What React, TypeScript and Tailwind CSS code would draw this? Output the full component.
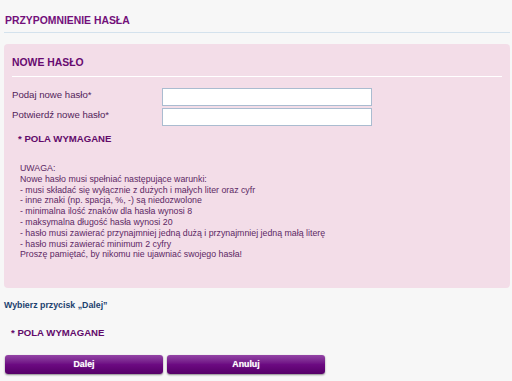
const rules = [
  "UWAGA:",
  "Nowe hasło musi spełniać następujące warunki:",
  "- musi składać się wyłącznie z dużych i małych liter oraz cyfr",
  "- inne znaki (np. spacja, %, -) są niedozwolone",
  "- minimalna ilość znaków dla hasła wynosi 8",
  "- maksymalna długość hasła wynosi 20",
  "- hasło musi zawierać przynajmniej jedną dużą i przynajmniej jedną małą literę",
  "- hasło musi zawierać minimum 2 cyfry",
  "Proszę pamiętać, by nikomu nie ujawniać swojego hasła!",
];

function Field({ label }: { label: string }) {
  return (
    <div className="flex items-start">
      <label className="w-[150px] text-[9.6px] leading-[14px] text-[#52235a]">{label}</label>
      <input
        type="password"
        className="h-[18px] w-[210px] border border-[#aabcd0] bg-white outline-none"
      />
    </div>
  );
}

function Button({ children }: { children: string }) {
  return (
    <button className="h-[19px] w-[158px] rounded-[3px] bg-linear-to-b from-[#9444a6] via-[#6c0a82] to-[#560068] text-[8.8px] font-bold text-white shadow-[0_1px_2px_rgba(0,0,0,0.45)] [text-shadow:0_0_1px_rgba(255,255,255,0.6)]">
      {children}
    </button>
  );
}

export default function App() {
  return (
    <div
      className="min-h-screen w-[512px] bg-[#f7f7f7] pl-[4px] pr-[2px]"
      style={{ fontFamily: '"Liberation Sans", Arial, sans-serif' }}
    >
      <div className="border-b border-[#d4e2ed] pl-[1px] pt-[15px] pb-[5px]">
        <h1 className="text-[10.4px] font-bold leading-[12px] text-[#73107a]">PRZYPOMNIENIE HASŁA</h1>
      </div>

      <div className="mt-[11px] rounded-[4px] bg-[#f3dde8] px-[8px] pb-[28px]">
        <h2 className="border-b border-white pt-[13px] pb-[7px] text-[10.4px] font-bold leading-[12px] text-[#680a70]">
          NOWE HASŁO
        </h2>

        <div className="mt-[11px] flex flex-col gap-[2px]">
          <Field label="Podaj nowe hasło*" />
          <Field label="Potwierdź nowe hasło*" />
        </div>

        <p className="mt-[7px] pl-[6px] text-[9.6px] font-bold leading-[12px] text-[#620a6a]">* POLA WYMAGANE</p>

        <div className="mt-[18px] pl-[8px] text-[8.8px] leading-[10.8px] text-[#5c2864]">
          {rules.map((line) => (
            <div key={line}>{line}</div>
          ))}
        </div>
      </div>

      <p className="mt-[11.5px] text-[8.8px] font-bold leading-[10.8px] text-[#1c426f]">
        Wybierz przycisk „Dalej”
      </p>

      <p className="mt-[17px] pl-[7px] text-[9.6px] font-bold leading-[12px] text-[#620a6a]">* POLA WYMAGANE</p>

      <div className="mt-[15.5px] ml-[1px] flex gap-[4px]">
        <Button>Dalej</Button>
        <Button>Anuluj</Button>
      </div>
    </div>
  );
}
